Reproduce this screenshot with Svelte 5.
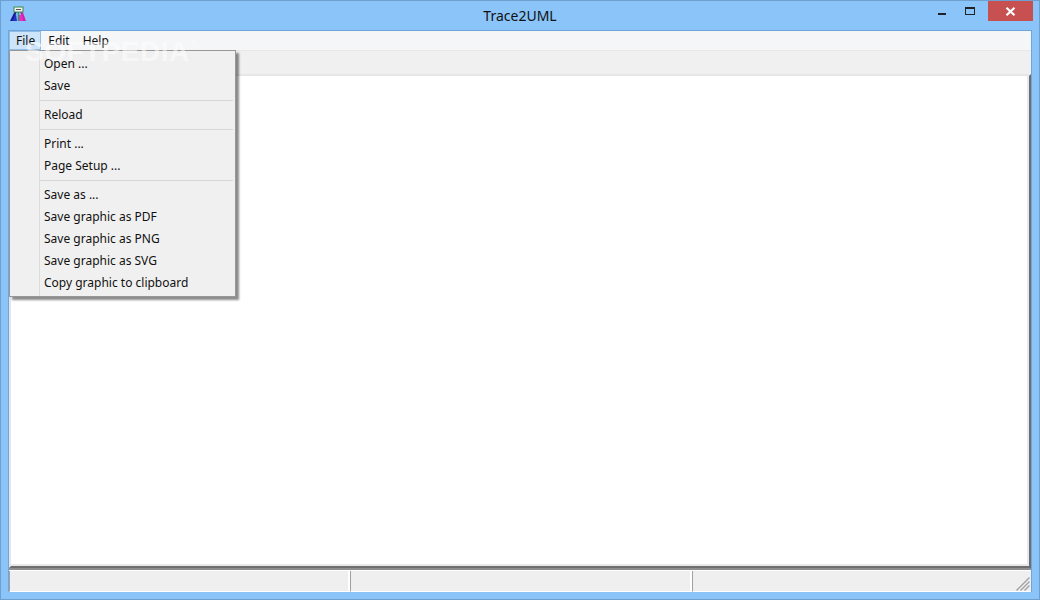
<script>
    const menus = ['File', 'Edit', 'Help']

    const groups = [
        ['Open ...', 'Save'],
        ['Reload'],
        ['Print ...', 'Page Setup ...'],
        ['Save as ...', 'Save graphic as PDF', 'Save graphic as PNG', 'Save graphic as SVG', 'Copy graphic to clipboard']
    ]
</script>

<div class="window">
    <header class="titlebar">
        <svg class="app-icon" width="18" height="16" viewBox="0 0 18 16">
            <path d="M1 15 L7 3 H9 L4 15 Z" fill="#1a1a8c" />
            <path d="M3 15 L7 8 L8 15 Z" fill="#2030d0" />
            <path d="M11 4 L13 4 L17 15 H13 Z" fill="#d020b0" />
            <path d="M9 9 H13 L14 15 H10 Z" fill="#e830c0" />
            <path d="M9.5 6 V15" stroke="#2a9a60" stroke-width="1.5" />
            <rect x="5" y="1" width="9" height="5" fill="#f4f4ec" stroke="#3a8a50" stroke-width="1" />
            <path d="M7 3.5 H12" stroke="#555" stroke-width="1" />
        </svg>
        <div class="title">Trace2UML</div>
        <div class="controls">
            <span class="ctl-min"></span>
            <span class="ctl-max"></span>
            <span class="ctl-close">
                <svg width="11" height="9" viewBox="0 0 11 9">
                    <path d="M1.5 0.8 L9.5 8.2 M9.5 0.8 L1.5 8.2" stroke="#fff" stroke-width="2.2" />
                </svg>
            </span>
        </div>
    </header>

    <div class="client">
        <nav class="menubar">
            {#each menus as m, i}
                <span class="menu-item" class:active={i === 0}>{m}</span>
            {/each}
        </nav>
        <div class="toolbar"></div>
        <main class="canvas"></main>
        <footer class="statusbar">
            <div class="pane"></div>
            <div class="pane"></div>
            <div class="pane last">
                <svg class="grip" width="14" height="14" viewBox="0 0 14 14">
                    <path d="M0.5 13.5 L13.5 0.5 M4.5 13.5 L13.5 4.5 M8.5 13.5 L13.5 8.5" stroke="#a0a0a0" stroke-width="1.4" />
                </svg>
            </div>
        </footer>

        <div class="popup">
            {#each groups as group, i}
                {#if i > 0}
                    <div class="sep"></div>
                {/if}
                {#each group as label}
                    <div class="popup-item">{label}</div>
                {/each}
            {/each}
        </div>
    </div>

    <div class="watermark">SOFTPEDIA<sup>®</sup></div>
</div>

<style>
    :global(body) {
        margin: 0;
    }

    .window {
        position: relative;
        box-sizing: border-box;
        width: 1040px;
        height: 600px;
        background: #8ac4f9;
        border: 1px solid #6f9fcf;
        display: flex;
        flex-direction: column;
        font-family: "Noto Sans", sans-serif;
        font-size: 12px;
        color: #111;
        overflow: hidden;
    }

    .titlebar {
        position: relative;
        height: 29px;
        flex-shrink: 0;
        display: flex;
        align-items: center;
        padding-left: 8px;
    }

    .app-icon {
        margin-top: -3px;
    }

    .title {
        position: absolute;
        left: 0;
        right: 0;
        top: 5px;
        text-align: center;
        font-size: 14px;
        line-height: 20px;
        color: #111;
    }

    .controls {
        position: absolute;
        top: 0;
        right: 6px;
        display: flex;
        align-items: flex-start;
    }

    .ctl-min {
        width: 8px;
        height: 2px;
        background: #222;
        margin: 12px 19px 0 0;
    }

    .ctl-max {
        box-sizing: border-box;
        width: 10px;
        height: 8px;
        border: 1px solid #222;
        border-top-width: 2px;
        margin: 6px 13px 0 0;
    }

    .ctl-close {
        width: 45px;
        height: 20px;
        background: #c75050;
        display: flex;
        align-items: center;
        justify-content: center;
    }

    .client {
        position: relative;
        flex: 1;
        margin: 0 7px 7px 7px;
        display: flex;
        flex-direction: column;
        border-top: 1px solid #6ea5da;
        border-left: 1px solid #6ea5da;
        border-right: 1px solid #6ea5da;
        background: #f0f0f0;
    }

    .menubar {
        height: 19px;
        flex-shrink: 0;
        background: #f5f6f7;
        display: flex;
        align-items: stretch;
        border-bottom: 1px solid #e8e8e8;
    }

    .menu-item {
        padding: 0 6px 0 7px;
        line-height: 19px;
    }

    .menu-item.active {
        background: #cde4f9;
        box-shadow: inset 0 0 0 1px #8fbce6;
    }

    .toolbar {
        height: 23px;
        flex-shrink: 0;
        background: #f0f0f0;
    }

    .canvas {
        flex: 1;
        background: #fff;
        border: 2px solid;
        border-color: #e6e6e6 #6e6e6e #6e6e6e #e6e6e6;
        box-shadow: inset -2px -2px 0 #e8e8e8;
    }

    .statusbar {
        height: 24px;
        flex-shrink: 0;
        display: flex;
        gap: 2px;
        border-top: 2px solid #8e8e8e;
        background: #fff;
        box-sizing: border-box;
        padding-top: 1px;
    }

    .pane {
        position: relative;
        flex: 1;
        background: #efefef;
        border-left: 1px solid #a0a0a0;
        border-bottom: 1px solid #fff;
    }

    .grip {
        position: absolute;
        right: 1px;
        bottom: 0;
    }

    .popup {
        position: absolute;
        left: 0;
        top: 19px;
        width: 227px;
        box-sizing: border-box;
        padding: 2px;
        background: #f0f0f0;
        border: 1px solid #979797;
        box-shadow: 3px 3px 2px rgba(0, 0, 0, 0.45);
        background-image: linear-gradient(#dcdcdc, #dcdcdc);
        background-repeat: no-repeat;
        background-size: 1px 100%;
        background-position: 29px 0;
    }

    .popup-item {
        height: 22px;
        line-height: 22px;
        padding-left: 32px;
    }

    .sep {
        height: 1px;
        margin: 3px 0 3px 28px;
        background: #d7d7d7;
    }

    .watermark {
        position: absolute;
        left: 24px;
        top: 35px;
        font-family: "Liberation Sans", sans-serif;
        font-size: 28px;
        font-weight: 700;
        line-height: 32px;
        letter-spacing: 0.5px;
        color: rgba(255, 255, 255, 0.55);
        pointer-events: none;
    }

    .watermark sup {
        font-size: 9px;
        font-weight: 400;
        vertical-align: 14px;
        line-height: 0;
    }
</style>
